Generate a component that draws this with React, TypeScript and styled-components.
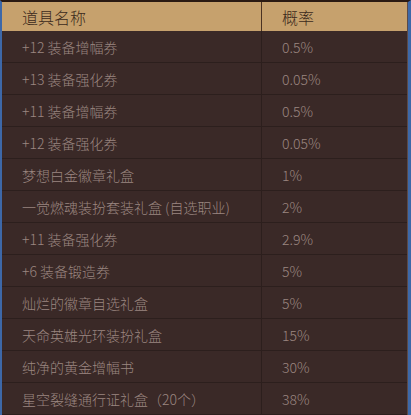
import React from 'react';
import styled, { createGlobalStyle } from 'styled-components';

const GlobalStyle = createGlobalStyle`
  html, body {
    margin: 0;
    padding: 0;
    background: #2a1d1b;
  }
  body {
    font-family: "Noto Sans CJK SC", "Liberation Sans", sans-serif;
  }
`;

const Frame = styled.div`
  width: 411px;
  height: 415px;
  box-sizing: border-box;
  border-top: 2px solid #2a1a12;
  border-left: 2px solid #3d68a8;
  border-right: 3px solid #3d68a8;
  background: #3a2927;
  overflow: hidden;
`;

const Table = styled.div`
  display: grid;
  grid-template-columns: 259px 1fr;
  border-right: 1px solid #5a4a48;
`;

const HeadCell = styled.div<{ $last?: boolean }>`
  height: 29px;
  display: flex;
  align-items: center;
  padding-left: 20px;
  background: #c6a16d;
  color: #3b2a1c;
  font-size: 16px;
  font-weight: 300;
  border-left: ${(p) => (p.$last ? '1px solid #4a3222' : 'none')};
`;

const Cell = styled.div<{ $last?: boolean }>`
  height: 31px;
  display: flex;
  align-items: center;
  padding-left: 20px;
  color: #9a8680;
  font-size: 14px;
  font-weight: 300;
  white-space: nowrap;
  border-bottom: 1px solid #2c1f1d;
  border-left: ${(p) => (p.$last ? '1px solid #2c1f1d' : 'none')};
`;

const rows: [string, string][] = [
  ['+12 装备增幅券', '0.5%'],
  ['+13 装备强化券', '0.05%'],
  ['+11 装备增幅券', '0.5%'],
  ['+12 装备强化券', '0.05%'],
  ['梦想白金徽章礼盒', '1%'],
  ['一觉燃魂装扮套装礼盒 (自选职业)', '2%'],
  ['+11 装备强化券', '2.9%'],
  ['+6 装备锻造券', '5%'],
  ['灿烂的徽章自选礼盒', '5%'],
  ['天命英雄光环装扮礼盒', '15%'],
  ['纯净的黄金增幅书', '30%'],
  ['星空裂缝通行证礼盒（20个）', '38%'],
];

export default function App() {
  return (
    <>
      <GlobalStyle />
      <Frame>
        <Table>
          <HeadCell>道具名称</HeadCell>
          <HeadCell $last>概率</HeadCell>
          {rows.map(([name, rate]) => (
            <React.Fragment key={name}>
              <Cell>{name}</Cell>
              <Cell $last>{rate}</Cell>
            </React.Fragment>
          ))}
        </Table>
      </Frame>
    </>
  );
}
